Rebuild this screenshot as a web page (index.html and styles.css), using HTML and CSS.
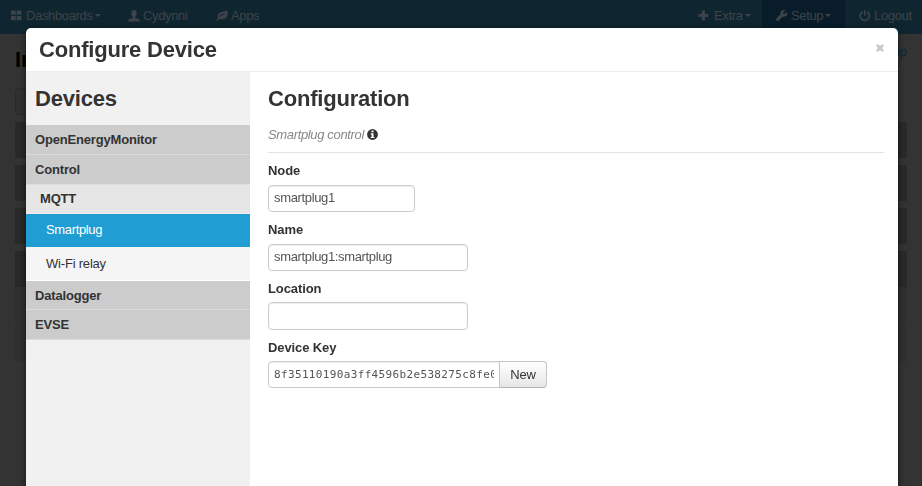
FILE: index.html
```html
<!DOCTYPE html>
<html lang="en">
<head>
<meta charset="utf-8">
<title>Configure Device</title>
<link rel="stylesheet" href="styles.css">
</head>
<body>
<nav class="navbar">
  <a class="nav-item dashboards"><svg class="icon" width="11" height="11" viewBox="0 0 11 11"><path d="M0 .5h4.700v4.300H0zM5.700.5h4.700v4.300H5.700zM0 5.900h4.700v4.300H0zM5.700 5.900h4.700v4.300H5.700z"/></svg><span>Dashboards</span><i class="caret"></i></a>
  <a class="nav-item user"><svg class="icon" width="12" height="12" viewBox="0 0 12 12"><path d="M6 0C4.200 0 3.200 1.300 3.300 3.200c0 1.500.6 2.700 1.400 3.400v1.200C3.800 8.400.6 9 .3 10.100L.2 11.500h11.600l-.1-1.400C11.400 9 8.200 8.400 7.300 7.800V6.600c.8-.7 1.400-1.900 1.400-3.400C8.800 1.300 7.800 0 6 0z"/></svg><span>Cydynni</span></a>
  <a class="nav-item apps"><svg class="icon" width="12" height="12" viewBox="0 0 12 12"><path fill-rule="evenodd" d="M11.200 0c1 2.600.7 5.900-1.200 7.700-1.800 1.700-4.600 2.100-6.800 1.200L1.700 11 .3 10.600 2 8.100C1.200 5.800 2 3.500 4.300 2.500 6.800 1.400 9.300 2.100 11.200 0zM3.300 7.300C4.800 5.600 6.300 5 8.700 4.500l-.1-.7C5.800 4.100 4.100 5 2.900 6.800z"/></svg><span>Apps</span></a>
  <span class="spacer"></span>
  <a class="nav-item extra"><svg class="icon" width="11" height="11" viewBox="0 0 11 11"><path d="M3.900.6h3v3.400h3.400v3H6.900v3.400h-3V7H.5V4h3.400z"/></svg><span>Extra</span><i class="caret"></i></a>
  <a class="nav-item setup"><svg class="icon" width="12" height="12" viewBox="0 0 12 12"><path d="M10.800 2 8.700 4.100 7.500 3.700 7.200 2.500 9.300.4C7.700-.3 6-.1 5 1.200c-.7.900-.8 2-.5 3L.5 8.300c-.7.800-.6 1.700 0 2.300.7.600 1.600.6 2.300-.1l4.100-4c1.200.4 2.700.1 3.600-.9 1-1 1.100-2.400.3-3.600z"/></svg><span>Setup</span><i class="caret"></i></a>
  <a class="nav-item logout"><svg class="icon stroke" width="12" height="12" viewBox="0 0 12 12"><path d="M3.500 1.800a4.600 4.600 0 1 0 4.600 0M5.800.2v5.200"/></svg><span>Logout</span></a>
</nav>
<main class="page">
  <div class="page-head"><h2>In</h2><a>Help</a></div>
  <button class="page-button"></button>
  <div class="node"></div>
  <div class="node"></div>
  <div class="node"></div>
  <div class="node open"></div>
  <div class="input-row"></div>
  <div class="input-row"></div>
</main>

<section class="modal">
  <header class="modal-header">
    <h3>Configure Device</h3>
    <svg class="close" width="8" height="8" viewBox="0 0 8 8"><path d="M1 1l6 6M7 1L1 7"/></svg>
  </header>
  <div class="modal-body">
    <aside class="sidebar">
      <h3>Devices</h3>
      <div class="group">OpenEnergyMonitor</div>
      <div class="group">Control</div>
      <div class="subgroup">MQTT</div>
      <div class="device selected">Smartplug</div>
      <div class="device">Wi-Fi relay</div>
      <div class="group short">Datalogger</div>
      <div class="group">EVSE</div>
    </aside>
    <div class="content">
      <h3>Configuration</h3>
      <p class="description"><em>Smartplug control</em><svg width="11" height="11" viewBox="0 0 11 11"><circle cx="5.500" cy="5.500" r="5.400" fill="#333"/><path fill="#fff" d="M4.500 1.600h2v1.600h-2zM3.700 4.200h2.800v3.700h.9v1.200H3.700V7.900h.9V5.400h-.9z"/></svg></p>
      <label for="node">Node</label>
      <input id="node" class="small" type="text" value="smartplug1">
      <label for="name">Name</label>
      <input id="name" type="text" value="smartplug1:smartplug">
      <label class="tight" for="location">Location</label>
      <input id="location" class="tall" type="text">
      <label class="tight" for="key">Device Key</label>
      <div class="key-row"><input id="key" class="key" type="text" value="8f35110190a3ff4596b2e538275c8fe0"><button class="new">New</button></div>
    </div>
  </div>
</section>
</body>
</html>
```
FILE: styles.css
```css
* { box-sizing: border-box; }
body {
  margin: 0;
  height: 486px;
  overflow: hidden;
  background: #333;
  color: #333;
  font: 13px/20px "Liberation Sans", Arial, sans-serif;
}
h2, h3, p { margin: 0; }

.navbar { display: flex; height: 34px; background: #0f2630; color: #3c4449; }
.nav-item { display: flex; align-items: center; padding-bottom: 3px; }
.nav-item span { font-size: 13px; letter-spacing: -.35px; }
.icon { fill: #3c4449; margin-right: 5px; flex: none; }
.icon.stroke { fill: none; stroke: #3c4449; stroke-width: 1.600; }
.caret { border: 3px solid transparent; border-top-color: #3c4449; border-bottom: 0; margin-left: 2px; }
.dashboards { width: 101px; padding-left: 11px; }
.dashboards .icon { margin-right: 4px; }
.user { width: 87px; padding-left: 27px; }
.user .icon, .apps .icon { margin-right: 3px; }
.apps { padding-left: 28px; }
.spacer { flex: 1; }
.extra { width: 64px; }
.setup { width: 83px; padding-left: 14px; background: #081d29; }
.setup .icon { margin-right: 3px; }
.logout { width: 77px; padding-left: 14px; }
.logout .icon { margin-right: 3px; }

.page { padding: 9px 15px; }
.page-head { display: flex; justify-content: space-between; height: 45px; }
.page-head h2 { font-size: 22px; line-height: 34px; color: #000; }
.page-head a { color: #06283c; font-size: 13px; line-height: 18px; }
.page-button { display: block; width: 60px; height: 27px; margin-bottom: 7px; border: 1px solid #292929; border-radius: 4px; background: #303030; }
.node { height: 36px; margin-bottom: 7px; background: #292929; }
.node.open { margin-bottom: 0; }
.input-row { height: 37px; margin-bottom: 1px; background: #303030; }

.modal {
  position: fixed;
  top: 28px;
  left: 26px;
  width: 872px;
  height: 480px;
  overflow: hidden;
  background: #fff;
  border-radius: 5px 5px 0 0;
  box-shadow: 0 2px 6px rgba(0, 0, 0, .6);
}
.modal h3 { font-size: 22px; line-height: 30px; letter-spacing: -.2px; }
.modal-header { display: flex; justify-content: space-between; height: 44px; padding: 7px 14px 0 13px; border-bottom: 1px solid #eee; }
.close { margin-top: 9px; stroke: #c8c8c8; stroke-width: 2.600; }
.modal-body { display: flex; height: 436px; }
.sidebar { width: 224px; background: #f1f1f1; }
.sidebar h3 { height: 53px; padding: 12px 9px 0; }
.group, .subgroup { height: 30px; padding-left: 9px; line-height: 30px; font-weight: bold; letter-spacing: -.18px; background: #ccc; border-bottom: 1px solid #ddd; }
.group.short { height: 29px; }
.subgroup { height: 29px; padding-left: 14px; line-height: 28px; background: #e6e6e6; border-color: #eee; }
.device { height: 34px; padding-left: 20px; line-height: 33px; letter-spacing: -.2px; background: #f5f5f5; border-bottom: 1px solid #fff; }
.device.selected { height: 33px; line-height: 32px; letter-spacing: -.35px; background: #209ed3; color: #fff; border: 0; }

.content { flex: 1; padding: 12px 14px 0 18px; }
.description { display: flex; height: 39px; margin: 0 0 8px; padding-top: 11px; line-height: 20px; letter-spacing: -.35px; color: #888; border-bottom: 1px solid #e3e3e3; }
.description svg { margin: 4px 0 0 3px; }
label { display: block; height: 20px; margin-bottom: 4px; font-weight: bold; letter-spacing: -.1px; }
.tight { margin-bottom: 3px; }
input { display: block; width: 200px; height: 27px; margin: 0 0 8px; padding: 0 5px 2px; border: 1px solid #ccc; border-radius: 4px; background: #fff; color: #555; font: 13px "Liberation Sans", Arial, sans-serif; letter-spacing: -.35px; box-shadow: inset 0 1px 1px rgba(0, 0, 0, .075); }
.small { width: 147px; }
.tall { height: 28px; }
.key-row { display: flex; }
.key { width: 232px; padding-bottom: 0; border-radius: 4px 0 0 4px; font: 11px "DejaVu Sans Mono", monospace; letter-spacing: .35px; }
.new { width: 48px; height: 27px; margin-left: -1px; padding: 0; border: 1px solid #c5c5c5; border-bottom-color: #b3b3b3; border-radius: 0 4px 4px 0; background: linear-gradient(#fff, #e6e6e6); color: #333; font: 13px "Liberation Sans", Arial, sans-serif; letter-spacing: -.2px; }
```
